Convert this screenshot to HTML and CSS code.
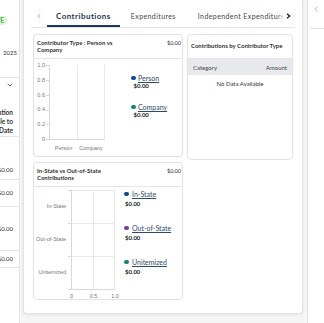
FILE: index.html
```html
<!DOCTYPE html>
<html lang="en">
<head>
  <meta charset="UTF-8" />
  <meta name="viewport" content="width=device-width, initial-scale=1.0"/>
  <title>Committee Finance</title>
  <link rel="stylesheet" href="styles.css">
</head>
<body>
  <aside class="side-left">
    <div class="side-inner">
      <div class="status-row"><span class="badge">ACTIVE</span></div>
      <div class="period"><span>Election Year</span><span>2025</span></div>
      <div class="rule"></div>
      <div class="select-row">
        <span>Summary</span>
        <svg width="6" height="4" viewBox="0 0 6 4"><path d="M0.7 0.7 L3 3 L5.3 0.7" fill="none" stroke="#555" stroke-width="0.9"/></svg>
      </div>
      <div class="total-label">Total Contribution<br>Available to<br>Date</div>
      <div class="rule"></div>
      <div class="amount-row first">$0.00</div>
      <div class="amount-row second">$0.00</div>
      <div class="amount-row third">$0.00</div>
      <div class="amount-row fourth">$0.00</div>
    </div>
  </aside>

  <main class="panel">
    <div class="tabs">
      <button class="tab-arrow prev">
        <svg width="4" height="6" viewBox="0 0 4 6"><path d="M3.4 0.6 L1 3 L3.4 5.4" fill="none" stroke="#aaa" stroke-width="0.8"/></svg>
      </button>
      <div class="tab-list">
        <span class="tab active">Contributions</span>
        <span class="tab">Expenditures</span>
        <span class="tab">Independent Expenditures</span>
      </div>
      <button class="tab-arrow next">
        <svg width="5" height="6" viewBox="0 0 5 6"><path d="M1 0.8 L3.7 3 L1 5.2" fill="none" stroke="#222" stroke-width="1.4"/></svg>
      </button>
    </div>

    <div class="cards">
      <div class="col">
        <section class="card card-type">
          <div class="card-head">
            <div class="card-title">Contributor Type : Person vs Company</div>
            <div class="card-total">$0.00</div>
          </div>
          <div class="card-body">
            <svg class="chart" width="95" height="97" viewBox="0 0 95 97">
              <g class="grid">
                <line x1="43.5" y1="6" x2="43.5" y2="80"/>
                <line x1="70.5" y1="6" x2="70.5" y2="80"/>
              </g>
              <g class="axis">
                <line x1="15.5" y1="6" x2="15.5" y2="80.5"/>
                <line x1="15" y1="80.5" x2="71" y2="80.5"/>
                <line x1="12" y1="6.5" x2="15" y2="6.5"/>
                <line x1="12" y1="21.5" x2="15" y2="21.5"/>
                <line x1="12" y1="36.5" x2="15" y2="36.5"/>
                <line x1="12" y1="51.5" x2="15" y2="51.5"/>
                <line x1="12" y1="65.5" x2="15" y2="65.5"/>
                <line x1="12" y1="80.5" x2="15" y2="80.5"/>
              </g>
              <g class="y-labels">
                <text x="11" y="6.5">1.0</text>
                <text x="11" y="21.5">0.8</text>
                <text x="11" y="36.5">0.6</text>
                <text x="11" y="51">0.4</text>
                <text x="11" y="65.5">0.2</text>
                <text x="11" y="80.5">0</text>
              </g>
              <g class="x-labels">
                <text x="29.5" y="90">Person</text>
                <text x="57" y="90">Company</text>
              </g>
            </svg>
            <div class="legend">
              <div class="legend-item">
                <div class="legend-label"><span class="dot navy"></span><a href="#">Person</a></div>
                <div class="legend-value">$0.00</div>
              </div>
              <div class="legend-item">
                <div class="legend-label"><span class="dot teal"></span><a href="#">Company</a></div>
                <div class="legend-value">$0.00</div>
              </div>
            </div>
          </div>
        </section>

        <section class="card card-state">
          <div class="card-head">
            <div class="card-title">In-State vs Out-of-State Contributions</div>
            <div class="card-total">$0.00</div>
          </div>
          <div class="card-body">
            <svg class="chart" width="89" height="113" viewBox="0 0 89 113">
              <g class="grid">
                <line x1="59.5" y1="3" x2="59.5" y2="102"/>
                <line x1="80.5" y1="3" x2="80.5" y2="102"/>
                <line x1="37" y1="3.5" x2="81" y2="3.5"/>
                <line x1="37" y1="36.5" x2="81" y2="36.5"/>
                <line x1="37" y1="69.5" x2="81" y2="69.5"/>
              </g>
              <g class="axis">
                <line x1="37.5" y1="3" x2="37.5" y2="102.5"/>
                <line x1="37" y1="102.5" x2="81" y2="102.5"/>
                <line x1="34" y1="3.5" x2="37" y2="3.5"/>
                <line x1="34" y1="36.5" x2="37" y2="36.5"/>
                <line x1="34" y1="69.5" x2="37" y2="69.5"/>
                <line x1="34" y1="102.5" x2="37" y2="102.5"/>
              </g>
              <g class="y-labels">
                <text x="32" y="20">In-State</text>
                <text x="32" y="53">Out-of-State</text>
                <text x="32" y="86">Unitemized</text>
              </g>
              <g class="x-labels">
                <text x="37.5" y="110">0</text>
                <text x="59.5" y="110">0.5</text>
                <text x="81" y="110">1.0</text>
              </g>
            </svg>
            <div class="legend legend-state">
              <div class="legend-item">
                <div class="legend-label"><span class="dot navy"></span><a href="#">In-State</a></div>
                <div class="legend-value">$0.00</div>
              </div>
              <div class="legend-item">
                <div class="legend-label"><span class="dot purple"></span><a href="#">Out-of-State</a></div>
                <div class="legend-value">$0.00</div>
              </div>
              <div class="legend-item">
                <div class="legend-label"><span class="dot teal"></span><a href="#">Unitemized</a></div>
                <div class="legend-value">$0.00</div>
              </div>
            </div>
          </div>
        </section>
      </div>

      <section class="card card-table">
        <div class="card-head">
          <div class="card-title wide">Contributions by Contributor Type</div>
        </div>
        <div class="table-head"><span>Category</span><span>Amount</span></div>
        <div class="table-empty">No Data Available</div>
      </section>
    </div>
  </main>

  <aside class="side-right">
    <div class="side-right-head">
      <svg width="4" height="6" viewBox="0 0 4 6"><path d="M3.4 0.6 L1 3 L3.4 5.4" fill="none" stroke="#aaa" stroke-width="0.8"/></svg>
    </div>
  </aside>
</body>
</html>
```

FILE: styles.css
```css
* { margin: 0; padding: 0; box-sizing: border-box; }
body {
  font-family: Lato, 'Liberation Sans', sans-serif;
  background: #f5f5f5;
  color: #333;
  height: 323px;
  overflow: hidden;
  display: flex;
  align-items: flex-start;
}

/* left summary column, mostly scrolled out of view */
.side-left {
  flex: none;
  width: 20px;
  height: 323px;
  background: #fff;
  border-right: 1px solid #e4e4e4;
  display: flex;
  justify-content: flex-end;
  overflow: hidden;
}
.side-inner { flex: none; width: 90px; }
.status-row { margin-top: 16px; display: flex; justify-content: flex-end; padding-right: 12px; }
.badge {
  font-size: 6.5px; font-weight: bold; line-height: 9px;
  padding: 0 3px; border-radius: 2px;
  background: #e2f5da; color: #4caf50;
}
.period {
  margin-top: 24px; font-size: 6px; line-height: 8px;
  display: flex; justify-content: space-between; padding-right: 2px;
}
.rule { height: 1px; background: #e6e6e6; }
.period + .rule { margin-top: 20px; }
.select-row {
  margin-top: 3px; height: 8px; font-size: 6px;
  display: flex; align-items: center; justify-content: space-between;
  padding-right: 6px; color: #333;
}
.total-label {
  margin-top: 19px; font-size: 6.5px; font-weight: bold; line-height: 9px;
  text-align: right; padding-right: 6px; white-space: nowrap;
}
.total-label + .rule { margin-top: 1px; }
.amount-row {
  display: flex; align-items: center; justify-content: flex-end;
  padding-right: 6px; font-size: 6px; line-height: 8px;
  border-bottom: 1px solid #e6e6e6;
}
.amount-row.first { height: 43px; align-items: flex-end; padding-bottom: 5px; }
.amount-row.second { height: 27px; }
.amount-row.third { height: 44px; }
.amount-row.fourth { height: 17px; }

/* main panel */
.panel {
  flex: none;
  width: 280px;
  height: 314px;
  margin-left: 3px;
  background: #fff;
  border: 1px solid #e4e4e4;
  border-top: none;
  border-radius: 0 0 4px 4px;
  box-shadow: 0 1px 3px rgba(0, 0, 0, 0.08);
  padding: 0 7px;
}
.tabs {
  display: flex;
  height: 28px;
  padding-top: 5px;
  border-bottom: 1px solid #e5e5e5;
}
.tab-arrow {
  flex: none; width: 16px;
  display: flex; align-items: center; justify-content: center;
  background: none; border: none;
}
.tab-arrow.next {
  width: 18px; margin-left: -6px; padding-left: 4px;
  background: linear-gradient(90deg, rgba(255,255,255,0), #fff 45%);
}
.tab-list { flex: 1; min-width: 0; display: flex; overflow: hidden; }
.tab {
  flex: none; padding: 0 11px;
  font-size: 7px; letter-spacing: 0.4px; line-height: 22px;
  color: #444; white-space: nowrap;
}
.tab.active {
  padding: 0 9px; font-size: 8px; letter-spacing: 0.45px;
  color: #1d3557; font-weight: bold; box-shadow: inset 0 -2px 0 #1d3557;
}

.cards { display: flex; gap: 4px; padding: 6px 2px 0; align-items: flex-start; }
.col { width: 150px; display: flex; flex-direction: column; gap: 5px; }
.card { background: #fff; border: 1px solid #e3e3e3; border-radius: 4px; overflow: hidden; }
.card-type { height: 123px; }
.card-state { height: 138px; }
.card-table { width: 106px; height: 126px; }
.card-head {
  height: 24px;
  display: flex; align-items: center; justify-content: space-between; gap: 4px;
  padding: 0 1px 0 3px;
  border-bottom: 1px solid #e6e6e6;
}
.card-title { font-size: 6px; font-weight: bold; line-height: 6.5px; color: #333; max-width: 88px; }
.card-title.wide { max-width: none; }
.card-total { align-self: flex-start; margin-top: 4.75px; font-size: 5.5px; line-height: 6.5px; color: #333; }
.card-body { display: flex; }

.chart { flex: none; display: block; }
.chart line { stroke-width: 1; }
.chart .grid line { stroke: #e8e8e8; }
.chart .axis line { stroke: #d8d8d8; }
.chart text {
  font-family: 'Liberation Sans', Arial, sans-serif;
  font-size: 5.5px; fill: #777; dominant-baseline: middle;
}
.chart .y-labels text { text-anchor: end; }
.chart .x-labels text { text-anchor: middle; }

.legend { display: flex; flex-direction: column; gap: 13px; padding-top: 15px; margin-left: 2px; }
.legend-state { gap: 16px; padding-top: 3px; margin-left: 1px; }
.legend-label { display: flex; align-items: center; gap: 2.5px; font-size: 7px; line-height: 8px; }
.legend-label a { color: #2d4b6d; }
.legend-state .legend-label { gap: 3.5px; }
.dot { width: 4.5px; height: 4.5px; border-radius: 50%; }
.dot.navy { background: #0d4a8c; }
.dot.teal { background: #13856e; }
.dot.purple { background: #7b3f9e; }
.legend-value { font-size: 6px; font-weight: bold; line-height: 8px; padding-left: 2.5px; color: #222; }
.legend-state .legend-value { margin-top: 2px; padding-left: 1px; }

.table-head {
  height: 16px; padding: 0 5px;
  display: flex; align-items: center; justify-content: space-between;
  background: #e7e9ec; font-size: 6px; color: #444;
}
.table-empty { text-align: center; font-size: 6px; line-height: 8px; padding-top: 5px; color: #333; }

/* right column, cut off */
.side-right {
  flex: 1;
  height: 323px;
  margin-left: 4px;
  background: #fff;
  border-left: 1px solid #e4e4e4;
}
.side-right-head { height: 29px; margin-left: 2px; padding: 6px 0 0 4px; border-bottom: 1px solid #e5e5e5; }
.side-right-head svg { display: block; }
```
